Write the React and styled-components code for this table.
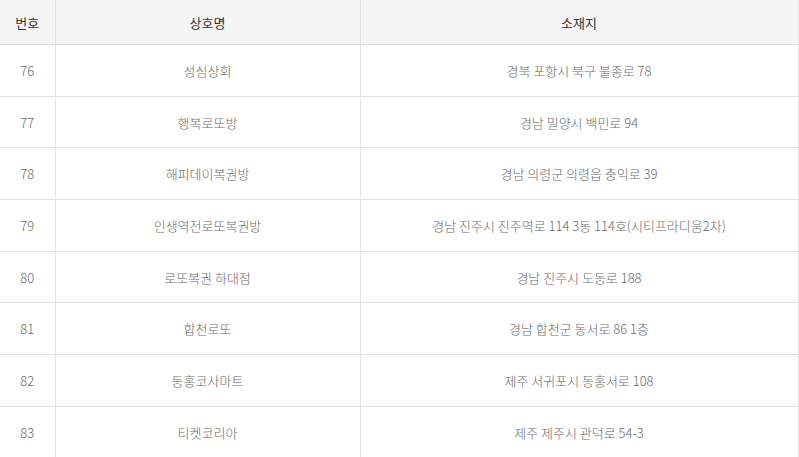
import React from "react";
import styled, { createGlobalStyle } from "styled-components";

const Global = createGlobalStyle`
  html, body { margin: 0; padding: 0; background: #fff; }
  body { font-family: "Noto Sans CJK KR", "Noto Sans", sans-serif; }
`;

const Table = styled.table`
  width: 798px;
  border-collapse: collapse;
  table-layout: fixed;
  font-size: 13px;
  font-family: "Noto Sans CJK KR", "Noto Sans", sans-serif;
`;

const Col = styled.col`
  width: ${(p) => p.$w};
`;

const Th = styled.th`
  height: 44px;
  padding: 0;
  background: #f5f5f5;
  color: #333;
  font-weight: 400;
  text-align: center;
  vertical-align: middle;
  border-bottom: 1px solid #dcdcdc;
  border-right: 1px solid #e2e2e2;
`;

const Td = styled.td`
  height: 50.7px;
  padding: 0;
  color: #6a6a6a;
  font-weight: 300;
  text-align: center;
  vertical-align: middle;
  border-bottom: 1px solid #e0e0e0;
  border-right: 1px solid #e2e2e2;
`;

const rows = [
  ["76", "성심상회", "경북 포항시 북구 불종로 78"],
  ["77", "행복로또방", "경남 밀양시 백민로 94"],
  ["78", "해피데이복권방", "경남 의령군 의령읍 충익로 39"],
  ["79", "인생역전로또복권방", "경남 진주시 진주역로 114 3동 114호(시티프라디움2차)"],
  ["80", "로또복권 하대점", "경남 진주시 도동로 188"],
  ["81", "합천로또", "경남 합천군 동서로 86 1층"],
  ["82", "동홍코사마트", "제주 서귀포시 동홍서로 108"],
  ["83", "티켓코리아", "제주 제주시 관덕로 54-3"],
];

export default function App() {
  return (
    <>
      <Global />
      <Table>
        <colgroup>
          <Col $w="55px" />
          <Col $w="305px" />
          <Col $w="438px" />
        </colgroup>
        <thead>
          <tr>
            <Th>번호</Th>
            <Th>상호명</Th>
            <Th>소재지</Th>
          </tr>
        </thead>
        <tbody>
          {rows.map((r) => (
            <tr key={r[0]}>
              <Td>{r[0]}</Td>
              <Td>{r[1]}</Td>
              <Td>{r[2]}</Td>
            </tr>
          ))}
        </tbody>
      </Table>
    </>
  );
}
